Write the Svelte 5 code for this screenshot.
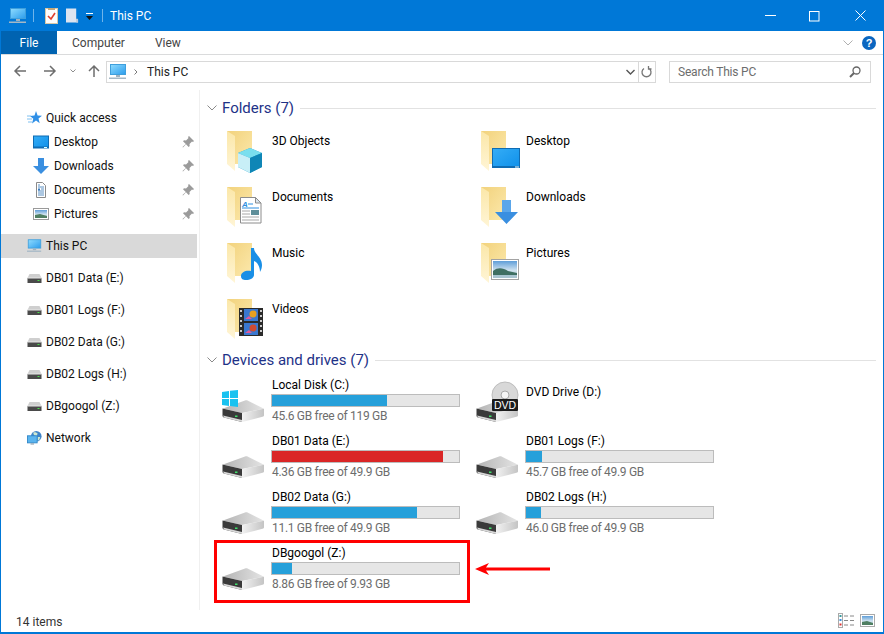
<script>
  const quick = [
    { name: 'Desktop', icon: 'n-desktop' },
    { name: 'Downloads', icon: 'n-down' },
    { name: 'Documents', icon: 'n-docs' },
    { name: 'Pictures', icon: 'n-pics' }
  ];
  const navDrives = ['DB01 Data (E:)', 'DB01 Logs (F:)', 'DB02 Data (G:)', 'DB02 Logs (H:)', 'DBgoogol (Z:)'];
  const folders = [
    { name: '3D Objects', icon: 'f-3d' },
    { name: 'Desktop', icon: 'f-desktop' },
    { name: 'Documents', icon: 'f-docs' },
    { name: 'Downloads', icon: 'f-down' },
    { name: 'Music', icon: 'f-music' },
    { name: 'Pictures', icon: 'f-pics' },
    { name: 'Videos', icon: 'f-videos' }
  ];
  const drives = [
    { name: 'Local Disk (C:)', free: '45.6', total: '119', icon: 'd-win' },
    { name: 'DVD Drive (D:)', icon: 'd-dvd' },
    { name: 'DB01 Data (E:)', free: '4.36', total: '49.9', full: true },
    { name: 'DB01 Logs (F:)', free: '45.7', total: '49.9' },
    { name: 'DB02 Data (G:)', free: '11.1', total: '49.9' },
    { name: 'DB02 Logs (H:)', free: '46.0', total: '49.9' },
    { name: 'DBgoogol (Z:)', free: '8.86', total: '9.93', marked: true }
  ];
  const used = (d) => ((1 - d.free / d.total) * 100).toFixed(1);
</script>

<svg class="defs" aria-hidden="true">
  <defs>
    <linearGradient id="screen" x1="0" y1="0" x2="1" y2="1">
      <stop offset="0" stop-color="#35adf6" />
      <stop offset="1" stop-color="#0f90ea" />
    </linearGradient>
    <linearGradient id="pcscreen" x1="0" y1="0" x2="1" y2="1">
      <stop offset="0" stop-color="#8fdcff" />
      <stop offset="1" stop-color="#2b9cec" />
    </linearGradient>
    <linearGradient id="flap" x1="0" y1="0" x2="0" y2="1">
      <stop offset="0" stop-color="#fbe7a8" />
      <stop offset="1" stop-color="#fff5d6" />
    </linearGradient>
    <linearGradient id="back" x1="0" y1="0" x2="1" y2="1">
      <stop offset="0" stop-color="#f2d27c" />
      <stop offset="1" stop-color="#fce9ad" />
    </linearGradient>
    <linearGradient id="top" x1="0" y1="0" x2="1" y2="0">
      <stop offset="0" stop-color="#b4b4b4" />
      <stop offset="1" stop-color="#e4e4e4" />
    </linearGradient>
    <linearGradient id="side" x1="0" y1="0" x2="1" y2="0">
      <stop offset="0" stop-color="#f2f2f2" />
      <stop offset="1" stop-color="#c4c4c4" />
    </linearGradient>
    <linearGradient id="sky" x1="0" y1="0" x2="0" y2="1">
      <stop offset="0" stop-color="#5f9ed8" />
      <stop offset="0.55" stop-color="#cfe2ef" />
      <stop offset="1" stop-color="#a9c4ca" />
    </linearGradient>
    <symbol id="pc" viewBox="0 0 18 16">
      <rect x="1.500" y="0.500" width="15" height="10" fill="url(#pcscreen)" stroke="#3f9fdc" />
      <rect x="7" y="11" width="4" height="2" fill="#9fb2c0" />
      <rect x="0" y="13.500" width="17" height="1.500" fill="#a5b8c6" />
    </symbol>
    <symbol id="n-desktop" viewBox="0 0 16 13">
      <rect x="0.500" y="0.500" width="15" height="12" fill="url(#screen)" stroke="#0f6cb3" />
      <rect x="1" y="11" width="14" height="1.500" fill="#0f6cb3" />
      <rect x="11" y="11.500" width="3" height="1" fill="#dff" />
    </symbol>
    <symbol id="n-down" viewBox="0 0 16 16">
      <path d="M5 0h6v8h5l-8 8-8-8h5z" fill="#3a8fe0" />
    </symbol>
    <symbol id="n-docs" viewBox="0 0 16 16">
      <path d="M3.500.500h6l3 3v12h-9z" fill="#fff" stroke="#8a8a8a" />
      <path d="M5 3h2M5 5h6M8 7h3M5 9h6M5 11h6M5 13h6" stroke="#5a90c4" />
      <rect x="5" y="6.500" width="2" height="2" fill="#3a7cc0" />
    </symbol>
    <symbol id="n-pics" viewBox="0 0 16 12">
      <rect x="0.500" y="0.500" width="15" height="11" fill="#fff" stroke="#9a9a9a" />
      <rect x="2" y="2" width="12" height="8" fill="url(#sky)" />
      <path d="M2 7l5-1 7 2v2H2z" fill="#4f7f62" />
    </symbol>
    <symbol id="pin" viewBox="0 0 12 12">
      <path d="M7 0l5 5-1 1-1-.5L7.500 8l.2 2-1 1L4 8.200 1 11.500 .5 11 3.800 8 1 5.300l1-1 2 .2L6.500 2 6 1z" fill="#9b9b9b" />
    </symbol>
    <symbol id="star" viewBox="0 0 15 14">
      <path d="M9 0l1.600 4.400L15 4.700l-3.500 2.900 1.200 4.600L9 9.600l-4 2.800 1.300-4.700L3 5l4.500-.4z" fill="#2f8fe6" />
      <path d="M0 5h4M0 8h5M1 11h4" stroke="#7fc0f0" />
    </symbol>
    <symbol id="n-drive" viewBox="0 0 14 9">
      <path d="M2 0h10l2 4H0z" fill="#cfcfcf" />
      <rect x="0" y="4" width="14" height="5" fill="#4a4a4a" />
      <rect x="0" y="3.500" width="14" height="1" fill="#e8e8e8" />
      <rect x="10" y="6" width="2" height="1" fill="#4ce04c" />
    </symbol>
    <symbol id="net" viewBox="0 0 17 16">
      <circle cx="10.500" cy="6" r="6" fill="#3f84c8" />
      <path d="M7 2c2-1 4 0 5 1l-1 3-3-1zM12 7l3 0-1 3-2 1z" fill="#cfe8d0" />
      <rect x="0.500" y="5.500" width="11" height="8" fill="#5ab4ee" stroke="#2f86c8" />
      <rect x="4" y="14" width="4" height="1.500" fill="#9aaab6" />
    </symbol>

    <symbol id="folder" viewBox="0 0 40 44">
      <path d="M0 0h25v33H8z" fill="url(#back)" />
      <path d="M0 0l8 5v35l-8-7z" fill="url(#flap)" />
    </symbol>
    <symbol id="f-3d" viewBox="0 0 40 44">
      <path d="M23 17l12 5v14l-12 6-12-6V22z" fill="#1f9fca" />
      <path d="M23 17l12 5-12 5-12-5z" fill="#7adfee" />
      <path d="M11 22l12 5v15l-12-6z" fill="#c8eff7" />
      <path d="M23 27l12-5v14l-12 6z" fill="#0f86b6" />
    </symbol>
    <symbol id="f-desktop" viewBox="0 0 40 44">
      <rect x="11.500" y="17.500" width="27" height="19" fill="url(#screen)" stroke="#0f6cb3" />
      <rect x="12" y="35" width="26" height="1.500" fill="#0f6cb3" />
      <rect x="34" y="35.500" width="4" height="1" fill="#e8f8ff" />
    </symbol>
    <symbol id="f-docs" viewBox="0 0 40 44">
      <path d="M13.500 10.500h15l5.500 5.500v20H13.500z" fill="#fff" stroke="#8c8c8c" />
      <path d="M28.500 10.500V16H34z" fill="#d8e4ee" stroke="#8c8c8c" />
      <text x="15" y="20" class="glyph">A</text>
      <path d="M21 17h5M15 21h17" stroke="#2f8fe0" />
      <path d="M15 24h8M15 27h8M15 30h17M15 33h17" stroke="#a8a8a8" />
      <rect x="24" y="23" width="8" height="5" fill="#5f8f9a" />
    </symbol>
    <symbol id="f-down" viewBox="0 0 40 44">
      <path d="M21 13h9v12h7L25.500 37 14 25h7z" fill="#3a8fe0" />
      <path d="M21 13h9v12h-9z" fill="#5aa6ea" />
    </symbol>
    <symbol id="f-music" viewBox="0 0 40 44">
      <path d="M24 5h3c0 6 8 9 8 17 0 3-1 5-2 7 0-6-3-10-6-11v14c0 3-4 5-8 5-3 0-5-1-5-4 0-4 5-6 10-5z" fill="#1a8fe6" />
    </symbol>
    <symbol id="f-pics" viewBox="0 0 40 44">
      <rect x="10.500" y="16.500" width="27" height="20" fill="#fff" stroke="#a3a3a3" />
      <rect x="12" y="18" width="24" height="17" fill="url(#sky)" />
      <path d="M12 28c5-4 10-3 15 0l9 2v5H12z" fill="#3f6f62" />
      <rect x="12" y="32" width="24" height="3" fill="#a8c4d0" />
    </symbol>
    <symbol id="f-videos" viewBox="0 0 40 44">
      <rect x="12" y="9" width="24" height="28" fill="#2a2a2a" />
      <rect x="17" y="10" width="14" height="12" fill="#3a78d0" />
      <rect x="17" y="24" width="14" height="12" fill="#3a78d0" />
      <circle cx="26" cy="15" r="3.500" fill="#e8a020" />
      <circle cx="26" cy="29" r="3.500" fill="#d04a30" />
      <path d="M18 20l4-3 3 3zM18 34l4-3 3 3z" fill="#e05a9a" />
      <path d="M14 11v2M14 16v2M14 21v2M14 26v2M14 31v2M34 11v2M34 16v2M34 21v2M34 26v2M34 31v2" stroke="#ccc" stroke-width="2" />
    </symbol>

    <symbol id="drive" viewBox="0 0 44 50">
      <path d="M1 33.500L23 25.500c1-.4 2-.3 3 .2l16 8L20 38z" fill="url(#top)" />
      <path d="M.5 33.500L20 38v9L2 42.500c-1-.3-1.500-1-1.500-2z" fill="#3a3a3a" />
      <path d="M20 38l22-4.300v6.300c0 1-.5 1.500-1.500 1.800L20 47z" fill="url(#side)" />
      <path d="M1 40.500l19 4.500v2L2 42.500z" fill="#d8d8d8" />
      <rect x="13" y="40.500" width="2.500" height="1.500" fill="#3fe06a" />
    </symbol>
    <symbol id="d-win" viewBox="0 0 44 50">
      <path d="M0 17l7-1v7H0zM8 15.800L16 15v8H8zM0 24h7v7l-7-1zM8 24h8v8l-8-1z" fill="#19c2f0" />
    </symbol>
    <symbol id="d-dvd" viewBox="0 0 44 50">
      <circle cx="29" cy="20" r="13" fill="#d8d8d8" stroke="#bdbdbd" />
      <circle cx="29" cy="20" r="4" fill="#f4f4f4" stroke="#a8a8a8" />
      <rect x="16" y="24" width="26" height="12" rx="1" fill="#1c1c1c" />
      <text x="29" y="34" class="dvd">DVD</text>
    </symbol>
  </defs>
</svg>

<div class="window">
  <header class="title">
    <svg class="qa-pc" width="18" height="16"><use href="#pc" /></svg>
    <span class="sep"></span>
    <svg class="qa" width="13" height="16" viewBox="0 0 13 16">
      <rect x="0.500" y="0.500" width="12" height="15" fill="#fdfdfd" stroke="#d8c8a8" />
      <rect x="3" y="0" width="7" height="2" fill="#c8a878" />
      <path d="M3 8l3 3 4-6" fill="none" stroke="#e0402c" stroke-width="1.600" />
    </svg>
    <svg class="qa" width="13" height="16" viewBox="0 0 14 16">
      <path d="M0 0h11v11l2 1v3H0z" fill="#dde4f0" />
      <path d="M11 11h2v4h-2z" fill="#b8c8dc" />
    </svg>
    <svg class="drop" width="8" height="8" viewBox="0 0 8 8">
      <rect x="0" y="0" width="7" height="1" fill="#fff" />
      <path d="M0 3h7L3.500 7z" fill="#111" />
    </svg>
    <span class="sep"></span>
    <span class="title-text">This PC</span>
    <div class="controls">
      <button aria-label="Minimize"><svg width="11" height="11"><path d="M0 5.500h11" stroke="#fff" /></svg></button>
      <button aria-label="Maximize"><svg class="max" width="10" height="10"><rect x="0.500" y="0.500" width="9.500" height="9.500" fill="none" stroke="#fff" /></svg></button>
      <button aria-label="Close"><svg width="11" height="11"><path d="M.5.500l10 10M10.500.500l-10 10" stroke="#fff" /></svg></button>
    </div>
  </header>

  <nav class="tabs">
    <span class="tab file">File</span>
    <span class="tab">Computer</span>
    <span class="tab">View</span>
    <svg class="ribbon-toggle" width="10" height="6" viewBox="0 0 10 6"><path d="M.5.500L5 5 9.500.500" fill="none" stroke="#b0b0b0" /></svg>
    <span class="help">?</span>
  </nav>

  <div class="addressbar">
    <svg class="navbtn" width="12" height="12" viewBox="0 0 12 12"><path d="M12 6H1.500M6 1L1 6l5 5" fill="none" stroke="#6e6e6e" stroke-width="1.500" /></svg>
    <svg class="navbtn fwd" width="12" height="12" viewBox="0 0 12 12"><path d="M0 6h10.500M6 1l5 5-5 5" fill="none" stroke="#6e6e6e" stroke-width="1.500" /></svg>
    <svg class="navbtn recent" width="6" height="4" viewBox="0 0 6 4"><path d="M.5.500L3 3 5.500.500" fill="none" stroke="#8e8e8e" /></svg>
    <svg class="navbtn up" width="12" height="12" viewBox="0 0 12 12"><path d="M6 12V1.500M1 6l5-5 5 5" fill="none" stroke="#6e6e6e" stroke-width="1.500" /></svg>
    <div class="path">
      <svg width="18" height="16"><use href="#pc" /></svg>
      <svg class="crumb" width="4" height="6" viewBox="0 0 4 6"><path d="M.5.500L3 3 .5 5.500" fill="none" stroke="#7a7a7a" /></svg>
      <span>This PC</span>
      <svg class="path-drop" width="9" height="6" viewBox="0 0 9 6"><path d="M.5 1L4.500 5 8.500 1" fill="none" stroke="#555" stroke-width="1.400" /></svg>
      <span class="refresh">
        <svg width="12" height="12" viewBox="0 0 12 12"><path d="M3 2.500a4.500 4.500 0 1 0 5 0M7.500 0v3h3" fill="none" stroke="#777" stroke-width="1.300" /></svg>
      </span>
    </div>
    <div class="search">
      <span>Search This PC</span>
      <svg width="12" height="12" viewBox="0 0 12 12"><circle cx="7.500" cy="4.500" r="3.500" fill="none" stroke="#666" stroke-width="1.300" /><path d="M5 7l-4 4" stroke="#666" stroke-width="2" /></svg>
    </div>
  </div>

  <div class="body">
    <aside class="nav">
      <div class="row">
        <svg class="ico-top" width="15" height="14"><use href="#star" /></svg>
        <span>Quick access</span>
      </div>
      {#each quick as q}
        <div class="row sub">
          <svg class="ico-sub" width="16" height="16"><use href={'#' + q.icon} /></svg>
          <span>{q.name}</span>
          <svg class="pin" width="12" height="12"><use href="#pin" /></svg>
        </div>
      {/each}
      <div class="row group selected">
        <svg class="ico-top" width="16" height="14"><use href="#pc" /></svg>
        <span>This PC</span>
      </div>
      {#each navDrives as d}
        <div class="row group">
          <svg class="ico-top" width="14" height="9"><use href="#n-drive" /></svg>
          <span>{d}</span>
        </div>
      {/each}
      <div class="row group">
        <svg class="ico-top" width="16" height="16"><use href="#net" /></svg>
        <span>Network</span>
      </div>
    </aside>

    <main class="content">
      <div class="section-head">
        <svg width="10" height="6" viewBox="0 0 10 6"><path d="M.5.500L5 5 9.500.500" fill="none" stroke="#8a8a8a" /></svg>
        <h2>Folders (7)</h2>
        <span class="rule"></span>
      </div>
      <div class="grid">
        {#each folders as f}
          <div class="tile">
            <svg class="folder" width="40" height="44">
              <use href="#folder" />
              <use href={'#' + f.icon} />
            </svg>
            <span class="name">{f.name}</span>
          </div>
        {/each}
      </div>

      <div class="section-head second">
        <svg width="10" height="6" viewBox="0 0 10 6"><path d="M.5.500L5 5 9.500.500" fill="none" stroke="#8a8a8a" /></svg>
        <h2>Devices and drives (7)</h2>
        <span class="rule"></span>
      </div>
      <div class="grid">
        {#each drives as d}
          <div class="tile drive-tile">
            <svg class="drive" width="44" height="50">
              <use href="#drive" />
              {#if d.icon}<use href={'#' + d.icon} />{/if}
            </svg>
            <div class="info" class:nobar={!d.total}>
              <span class="name">{d.name}</span>
              {#if d.total}
                <div class="bar"><div class="fill" class:full={d.full} style="width: {used(d)}%"></div></div>
                <span class="free">{d.free} GB free of {d.total} GB</span>
              {/if}
            </div>
            {#if d.marked}
              <div class="redbox"></div>
              <svg class="arrow" width="75" height="12" viewBox="0 0 75 12">
                <path d="M0 6l14-6-3 4.500h64v3H11l3 4.500z" fill="#f00" />
              </svg>
            {/if}
          </div>
        {/each}
      </div>
    </main>
  </div>

  <footer class="status">
    <span>14 items</span>
    <div class="views">
      <svg width="16" height="15" viewBox="0 0 16 15">
        <rect x="0.500" y="0.500" width="4" height="14" fill="#fff" stroke="#aaa" />
        <rect x="1.500" y="2" width="2" height="2" fill="#3a9a9a" />
        <rect x="1.500" y="6" width="2" height="2" fill="#3a8fe0" />
        <rect x="1.500" y="10.500" width="2" height="2" fill="#e03030" />
        <path d="M6 3h4M12 3h4M6 7.500h4M12 7.500h4M6 12h4M12 12h4" stroke="#888" />
      </svg>
      <svg width="15" height="13" viewBox="0 0 15 13">
        <rect x="0.500" y="0.500" width="14" height="12" fill="#fff" stroke="#aaa" />
        <rect x="2" y="2" width="11" height="9" fill="url(#sky)" />
        <path d="M2 8l5-1 6 2v2H2z" fill="#4f7f62" />
      </svg>
    </div>
  </footer>
</div>

<style>
  :global(body) {
    margin: 0;
    background: #fff;
  }

  .defs {
    position: absolute;
    width: 0;
    height: 0;
  }

  .window {
    box-sizing: border-box;
    width: 884px;
    height: 634px;
    display: flex;
    flex-direction: column;
    border: solid #0078d7;
    border-width: 0 1px 2px;
    background: #fff;
    color: #000;
    font-family: Roboto, "Noto Sans", sans-serif;
    font-size: 12px;
    line-height: 16px;
    overflow: hidden;
  }

  svg {
    display: block;
    flex: none;
    overflow: visible;
  }

  .glyph {
    font: italic 700 8px "Liberation Sans", sans-serif;
    fill: #2f8fe0;
  }

  .dvd {
    font: 10.500px "Liberation Sans", sans-serif;
    fill: #fff;
    text-anchor: middle;
  }

  .title {
    height: 31px;
    flex: none;
    display: flex;
    align-items: center;
    background: #0078d7;
    color: #fff;
  }

  .qa-pc {
    margin-left: 8px;
  }

  .sep {
    width: 1px;
    height: 13px;
    background: #6fb4ea;
    margin-left: 6px;
  }

  .sep + .qa {
    margin-left: 11px;
  }

  .qa + .qa {
    margin-left: 8px;
  }

  .drop {
    margin-left: 7px;
    margin-top: 3px;
  }

  .drop + .sep {
    margin-left: 8px;
  }

  .title-text {
    margin-left: 7px;
  }

  .controls {
    margin-left: auto;
    display: flex;
  }

  .controls button {
    width: 45px;
    height: 31px;
    padding: 0;
    border: 0;
    background: none;
    display: flex;
    align-items: center;
    justify-content: center;
  }

  .max {
    margin-right: 3px;
  }

  .tabs {
    height: 24px;
    flex: none;
    box-sizing: border-box;
    display: flex;
    align-items: center;
    border-bottom: 1px solid #dadbdc;
    color: #444;
    padding-right: 4px;
  }

  .tab {
    padding: 0 15px;
  }

  .tab.file {
    align-self: stretch;
    width: 56px;
    box-sizing: border-box;
    display: flex;
    align-items: center;
    justify-content: center;
    background: #0063b1;
    color: #fff;
    padding: 0;
    height: 23px;
  }

  .ribbon-toggle {
    margin-left: auto;
  }

  .help {
    width: 14px;
    height: 14px;
    margin: 0 3px 0 9px;
    border-radius: 50%;
    background: #0a66c0;
    color: #fff;
    font: 700 11px/14px "Liberation Sans", sans-serif;
    text-align: center;
  }

  .addressbar {
    height: 35px;
    flex: none;
    box-sizing: border-box;
    display: flex;
    align-items: flex-start;
    padding: 6px 11px 0 0;
  }

  .navbtn {
    margin: 4px 0 0 18px;
  }

  .navbtn:first-child {
    margin-left: 13px;
  }

  .fwd {
    margin-left: 18px;
  }

  .recent {
    margin: 8px 0 0 14px;
  }

  .up {
    margin-left: 12px;
  }

  .path {
    box-sizing: border-box;
    width: 550px;
    height: 22px;
    margin-left: 6px;
    border: 1px solid #d9d9d9;
    display: flex;
    align-items: center;
    padding-left: 2px;
    color: #222;
  }

  .crumb {
    margin-left: 7px;
  }

  .path span:not(.refresh) {
    margin-left: 9px;
  }

  .path-drop {
    margin-left: auto;
    margin-right: 3px;
  }

  .refresh {
    width: 16px;
    height: 20px;
    border-left: 1px solid #d9d9d9;
    display: flex;
    align-items: center;
    justify-content: center;
  }

  .search {
    box-sizing: border-box;
    width: 202px;
    height: 22px;
    margin-left: 13px;
    border: 1px solid #d9d9d9;
    display: flex;
    align-items: center;
    justify-content: space-between;
    padding: 0 9px 0 8px;
    color: #6d6d6d;
    letter-spacing: -0.2px;
  }

  .body {
    flex: 1;
    min-height: 0;
    display: flex;
  }

  .nav {
    width: 196px;
    flex: none;
    padding-top: 16px;
    margin-right: 2px;
  }

  .row {
    height: 24px;
    display: flex;
    align-items: center;
    padding-left: 26px;
    color: #111;
  }

  .row.sub {
    padding-left: 32px;
    padding-right: 3px;
  }

  .row.group {
    margin-top: 8px;
  }

  .row.selected {
    background: #d9d9d9;
  }

  .ico-top {
    width: 15px;
    margin-right: 4px;
  }

  .ico-sub {
    margin-right: 5px;
  }

  .pin {
    margin-left: auto;
  }

  .content {
    flex: 1;
    min-width: 0;
    border-left: 1px solid #f0f0f0;
    padding-top: 6px;
  }

  .section-head {
    height: 24px;
    display: flex;
    align-items: center;
    padding: 0 7px 0 7px;
  }

  .section-head.second {
    margin-top: 1px;
  }

  h2 {
    margin: 0 6px 0 5px;
    font-size: 15px;
    font-weight: 400;
    color: #1e3287;
  }

  .rule {
    flex: 1;
    height: 1px;
    background: #e2e2e2;
  }

  .grid {
    display: grid;
    grid-template-columns: 254px 254px;
    grid-auto-rows: 56px;
    margin: 3px 0 0 14px;
  }

  .tile {
    position: relative;
    display: flex;
    align-items: flex-start;
  }

  .folder {
    margin: 8px 5px 0 13px;
  }

  .tile > .name {
    margin-top: 10px;
  }

  .drive {
    margin-left: 8px;
    margin-right: 6px;
  }

  .info {
    display: flex;
    flex-direction: column;
    width: 189px;
    margin-left: -1px;
    padding-top: 2px;
  }

  .info.nobar {
    padding-top: 9px;
  }

  .info .name {
    padding-left: 1px;
  }

  .bar {
    box-sizing: border-box;
    height: 13px;
    border: 1px solid #bcbcbc;
    background: #e6e6e6;
    margin-top: 1px;
  }

  .fill {
    height: 100%;
    background: #26a0da;
  }

  .fill.full {
    background: #da2626;
  }

  .free {
    padding-left: 1px;
    margin-top: 1px;
    color: #6d6d6d;
    letter-spacing: -0.3px;
  }

  .redbox {
    position: absolute;
    left: 0;
    top: -3px;
    box-sizing: border-box;
    width: 256px;
    height: 63px;
    border: 3px solid #f00;
  }

  .arrow {
    position: absolute;
    left: 261px;
    top: 20px;
  }

  .status {
    height: 22px;
    flex: none;
    box-sizing: border-box;
    display: flex;
    align-items: center;
    justify-content: space-between;
    padding: 2px 8px 0 15px;
    color: #333;
  }

  .views {
    display: flex;
    align-items: center;
    gap: 6px;
    margin-top: -3px;
  }
</style>
